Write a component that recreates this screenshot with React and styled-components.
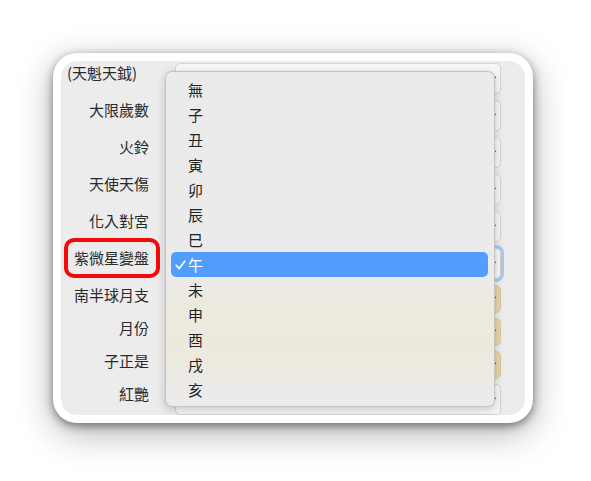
import styled, { createGlobalStyle } from 'styled-components'

const Global = createGlobalStyle`
html,body{margin:0;padding:0;background:#fff;}
body{font-family:"Noto Sans CJK TC","Noto Sans",sans-serif;}
*{box-sizing:border-box;}
`

const rows = [
    { label: '(天魁天鉞)', left: true },
    { label: '大限歲數' },
    { label: '火鈴' },
    { label: '天使天傷' },
    { label: '化入對宮' },
    { label: '紫微星變盤', focus: true, mark: true },
    { label: '南半球月支', tone: 'tan' },
    { label: '月份', tone: 'tan' },
    { label: '子正是', tone: 'tan' },
    { label: '紅艷' },
]

const opciones = ['無', '子', '丑', '寅', '卯', '辰', '巳', '午', '未', '申', '酉', '戌', '亥']

export default function App(){
    return (
        <Pagina>
            <Global />
            <Marco>
                <Panel>
                    <Formulario>
                        {rows.map(r=>(
                            <Fila key={r.label} tone={r.tone}>
                                <Etiqueta left={r.left} mark={r.mark}>{r.label}</Etiqueta>
                                <Selector tone={r.tone} focus={r.focus}>
                                    <Flecha />
                                </Selector>
                            </Fila>
                        ))}
                    </Formulario>
                    <Menu>
                        {opciones.map(o=>(
                            <Opcion key={o} selected={o==='午'}>
                                {o==='午' && <Check />}
                                {o}
                            </Opcion>
                        ))}
                    </Menu>
                </Panel>
            </Marco>
        </Pagina>
    )
}

function Flecha(){
    return (
        <FlechaSvg width="8" height="6" viewBox="0 0 8 6">
            <path d="M1 1.2 L4 4.4 L7 1.2" fill="none" stroke="#111" strokeWidth="1.5" strokeLinecap="round" />
        </FlechaSvg>
    )
}

function Check(){
    return (
        <CheckSvg width="11" height="10" viewBox="0 0 11 10">
            <path d="M1.2 5.4 L4.2 8.6 L9.8 1.2" fill="none" stroke="#fff" strokeWidth="1.7" strokeLinecap="round" strokeLinejoin="round" />
        </CheckSvg>
    )
}

const Pagina=styled.div`
width:591px;
height:481px;
padding:53px 0 0 53px;
`
const Marco=styled.div`
width:480px;
height:370px;
background:#fff;
border-radius:24px;
padding:8px;
box-shadow:0 3px 10px rgba(0,0,0,0.45),0 10px 36px rgba(0,0,0,0.3);
`
const Panel=styled.div`
position:relative;
width:100%;
height:100%;
background:#ececec;
border-radius:16px;
overflow:hidden;
padding:2px 24px 0 6px;
`
const Formulario=styled.div`
display:flex;
flex-direction:column;
`
const Fila=styled.div`
display:flex;
align-items:flex-start;
gap:24px;
height:${p=>p.tone==='tan'?'33px':'37px'};
flex-shrink:0;
`
const Etiqueta=styled.div`
position:relative;
width:84px;
flex-shrink:0;
font-size:15px;
line-height:19px;
color:#2a2a2a;
text-align:${p=>p.left?'left':'right'};
padding-right:${p=>p.left?'0':'2px'};
white-space:nowrap;
${p=>p.mark?`
&::after{
    content:'';
    position:absolute;
    left:-3px;
    right:-9px;
    top:-10px;
    bottom:-11px;
    border:4px solid #f50a0a;
    border-radius:10px;
}`:''}
`
const Selector=styled.div`
position:relative;
flex:1;
height:${p=>p.tone==='tan'?'28px':'31px'};
background:${p=>p.tone==='tan'?'#e6d6aa':'#f7f7f7'};
border:1px solid ${p=>p.tone==='tan'?'#d8c89c':'#d2d2d2'};
border-radius:5px;
display:flex;
align-items:center;
justify-content:flex-end;
padding:0 4px 0 20px;
box-shadow:${p=>p.focus?'0 0 0 3px #a9c9f2':'none'};
`
const FlechaSvg=styled.svg`
flex-shrink:0;
`
const Menu=styled.div`
position:absolute;
left:104px;
top:10px;
width:330px;
height:336px;
padding:5px 0;
border-radius:7px;
background:linear-gradient(180deg,#ebebeb 0%,#ebebeb 60%,#eceae0 68%,#ede9dd 82%,#eceae2 90%,#ebebeb 97%);
border:0.5px solid rgba(0,0,0,0.16);
box-shadow:0 3px 10px rgba(0,0,0,0.18),0 0 2px rgba(0,0,0,0.08);
display:flex;
flex-direction:column;
`
const Opcion=styled.div`
position:relative;
height:25px;
flex-shrink:0;
margin:0 6px 0 5px;
padding-left:17px;
display:flex;
align-items:center;
font-size:15px;
color:${p=>p.selected?'#fff':'#222'};
background:${p=>p.selected?'#529eff':'transparent'};
border-radius:5px;
`
const CheckSvg=styled.svg`
position:absolute;
left:4px;
top:8px;
`
